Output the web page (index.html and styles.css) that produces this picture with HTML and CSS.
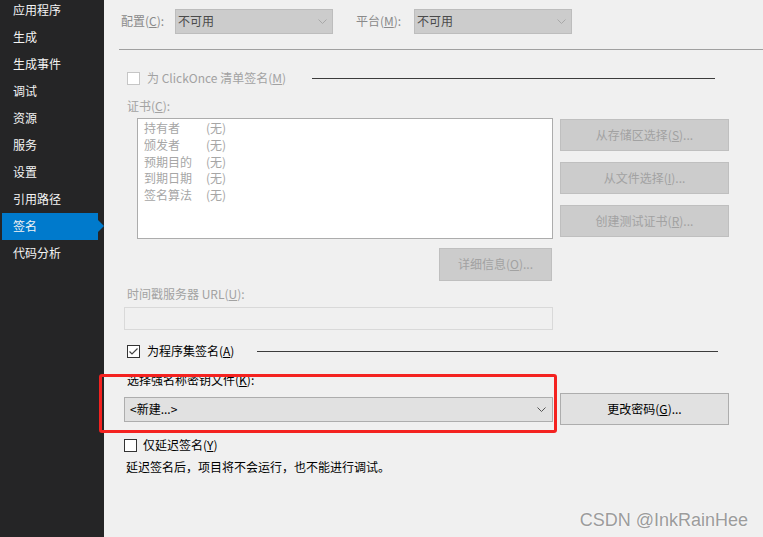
FILE: index.html
```html
<!DOCTYPE html>
<html>
<head>
  <meta charset="UTF-8">
  <title>签名</title>
  <link rel="stylesheet" href="styles.css">
</head>
<body>
  <div class="page">
    <!-- left navigation -->
    <ul class="nav">
      <li>应用程序</li>
      <li>生成</li>
      <li>生成事件</li>
      <li>调试</li>
      <li>资源</li>
      <li>服务</li>
      <li>设置</li>
      <li>引用路径</li>
      <li class="active">签名</li>
      <li>代码分析</li>
    </ul>

    <div class="main">
      <!-- configuration / platform -->
      <div class="topbar">
        <label class="lbl lbl-cfg">配置(<u>C</u>):</label>
        <div class="combo combo-off">
          <span class="txt">不可用</span>
          <svg class="chev" width="9" height="5" viewBox="0 0 9 5"><path d="M0.5 0.5L4.5 4.5L8.5 0.5"/></svg>
        </div>
        <label class="lbl lbl-plat">平台(<u>M</u>):</label>
        <div class="combo combo-off">
          <span class="txt">不可用</span>
          <svg class="chev" width="9" height="5" viewBox="0 0 9 5"><path d="M0.5 0.5L4.5 4.5L8.5 0.5"/></svg>
        </div>
      </div>
      <div class="rule"></div>

      <!-- ClickOnce manifest -->
      <div class="check-row row-clickonce off">
        <span class="box"></span>
        <span class="txt">为 ClickOnce 清单签名(<u>M</u>)</span>
        <span class="sep"></span>
      </div>

      <div class="field-label lbl-cert off">证书(<u>C</u>):</div>
      <div class="cert">
        <div class="cert-list">
          <div class="cert-row"><span class="k">持有者</span><span>(无)</span></div>
          <div class="cert-row"><span class="k">颁发者</span><span>(无)</span></div>
          <div class="cert-row"><span class="k">预期目的</span><span>(无)</span></div>
          <div class="cert-row"><span class="k">到期日期</span><span>(无)</span></div>
          <div class="cert-row"><span class="k">签名算法</span><span>(无)</span></div>
        </div>
        <div class="cert-btns">
          <button class="btn off">从存储区选择(<u>S</u>)...</button>
          <button class="btn off">从文件选择(<u>I</u>)...</button>
          <button class="btn off">创建测试证书(<u>R</u>)...</button>
        </div>
      </div>
      <button class="btn off btn-details">详细信息(<u>O</u>)...</button>

      <div class="field-label lbl-time off">时间戳服务器 URL(<u>U</u>):</div>
      <div class="textbox"></div>

      <!-- assembly signing -->
      <div class="check-row row-assembly">
        <span class="box"><svg width="11" height="11" viewBox="0 0 11 11"><path d="M1.5 5.5L4 8L9.5 2.5"/></svg></span>
        <span class="txt">为程序集签名(<u>A</u>)</span>
        <span class="sep"></span>
      </div>

      <div class="field-label lbl-key">选择强名称密钥文件(<u>K</u>):</div>
      <div class="key-row">
        <div class="combo combo-key">
          <span class="txt">&lt;新建...&gt;</span>
          <svg class="chev" width="9" height="5" viewBox="0 0 9 5"><path d="M0.5 0.5L4.5 4.5L8.5 0.5"/></svg>
        </div>
        <button class="btn btn-pwd">更改密码(<u>G</u>)...</button>
      </div>

      <div class="check-row row-delay">
        <span class="box"></span>
        <span class="txt">仅延迟签名(<u>Y</u>)</span>
      </div>
      <p class="note">延迟签名后，项目将不会运行，也不能进行调试。</p>
    </div>

    <!-- red annotation + watermark drawn over the page -->
    <div class="annot"></div>
    <div class="watermark">CSDN @InkRainHee</div>
  </div>
</body>
</html>
```

FILE: styles.css
```css
/* --- base --- */
html,body{margin:0;padding:0;}
body{font-family:"Noto Sans CJK SC","Noto Sans",sans-serif;font-size:12px;background:#f0f0f0;color:#000;}
u{text-underline-offset:1px;}
.page{position:relative;display:flex;width:763px;height:537px;overflow:hidden;}

/* --- left nav --- */
.nav{width:104px;flex:none;margin:0;padding:0;list-style:none;background:#252526;color:#f4f4f4;}
.nav li{position:relative;height:27px;line-height:25px;padding-left:13px;}
.nav li:first-child{margin-top:-3px;}
.nav li.active{background:#007acc;margin:0 6px 0 2px;padding-left:11px;}
.nav li.active::after{content:"";position:absolute;right:-6px;top:7px;border-left:6px solid #007acc;border-top:6px solid transparent;border-bottom:6px solid transparent;}

/* --- main panel --- */
.main{flex:1;}
.off{color:#a2a2a2;}
.txt{margin-bottom:2px;}

.topbar{display:flex;align-items:center;height:25px;margin-top:9px;}
.lbl{color:#8a8a8a;margin-bottom:2px;}
.lbl-cfg{margin-left:17px;width:54px;}
.lbl-plat{margin-left:23px;width:58px;}

.combo{box-sizing:border-box;height:25px;display:flex;align-items:center;justify-content:space-between;border:1px solid;padding:0 5px 0 2px;}
.combo-off{width:158px;background:#cccccc;border-color:#bdbdbd;color:#4a4a4a;}
.combo-off .chev path{stroke:#a8a8a8;}
.chev path{fill:none;stroke:#555;stroke-width:1;}

.rule{height:1px;background:#a0a0a0;margin:15px 0 0 15px;}

/* checkbox rows */
.check-row{display:flex;align-items:center;height:16px;margin-left:23px;}
.box{box-sizing:border-box;width:13px;height:13px;flex:none;border:1px solid #333;background:#fff;margin-right:7px;display:flex;}
.box svg path{fill:none;stroke:#444;stroke-width:1.2;}
.check-row.off .box{border-color:#c6c6c6;}
.sep{flex:1;height:1px;background:#3c3c3c;}
.row-clickonce{margin-top:20px;width:588px;}
.row-clickonce .sep{margin-left:26px;}
.row-assembly{margin-top:13px;width:591px;}
.row-assembly .sep{margin-left:23px;}
.row-delay{margin:12px 0 0 20px;}
.row-delay .box{margin-right:6px;}

.field-label{height:16px;line-height:14px;margin-left:23px;}
.lbl-cert{margin-top:13px;}
.lbl-time{margin-top:6px;}
.lbl-key{margin-top:14px;}

/* certificate block */
.cert{display:flex;margin:3px 0 0 33px;}
.cert-list{box-sizing:border-box;width:416px;height:121px;background:#fff;border:1px solid #acacac;padding:1px 0 0 6px;color:#a6a6a6;}
.cert-row{line-height:16.8px;}
.cert-row .k{display:inline-block;width:62px;}
.cert-btns{display:flex;flex-direction:column;gap:11px;margin:1px 0 0 7px;}

.btn{box-sizing:border-box;height:32px;border:1px solid;font:inherit;padding:0 0 2px;}
.btn.off{background:#cccccc;border-color:#bfbfbf;color:#a2a2a2;}
.cert-btns .btn{width:169px;}
.btn-details{display:block;width:113px;height:33px;margin:9px 0 0 335px;}

.textbox{box-sizing:border-box;width:429px;height:23px;margin:4px 0 0 20px;border:1px solid #d9d9d9;background:#f0f0f0;}

/* key file */
.key-row{display:flex;align-items:center;height:32px;margin:4px 0 0 20px;}
.combo-key{width:429px;background:#e1e1e1;border-color:#adadad;padding:0 6px 0 5px;}
.btn-pwd{width:169px;margin-left:7px;background:#e1e1e1;border-color:#adadad;color:#000;}

.note{margin:7px 0 0 22px;height:16px;line-height:14px;}

/* overlays */
.annot{position:absolute;left:99px;top:374px;width:458px;height:59px;box-sizing:border-box;border:3px solid #f42220;border-radius:3px;}
.watermark{position:absolute;right:15px;top:510px;font-family:"Liberation Sans",Arial,sans-serif;font-size:18px;line-height:20px;color:#9c9c9c;text-shadow:0 0 2px #fff;}
```
